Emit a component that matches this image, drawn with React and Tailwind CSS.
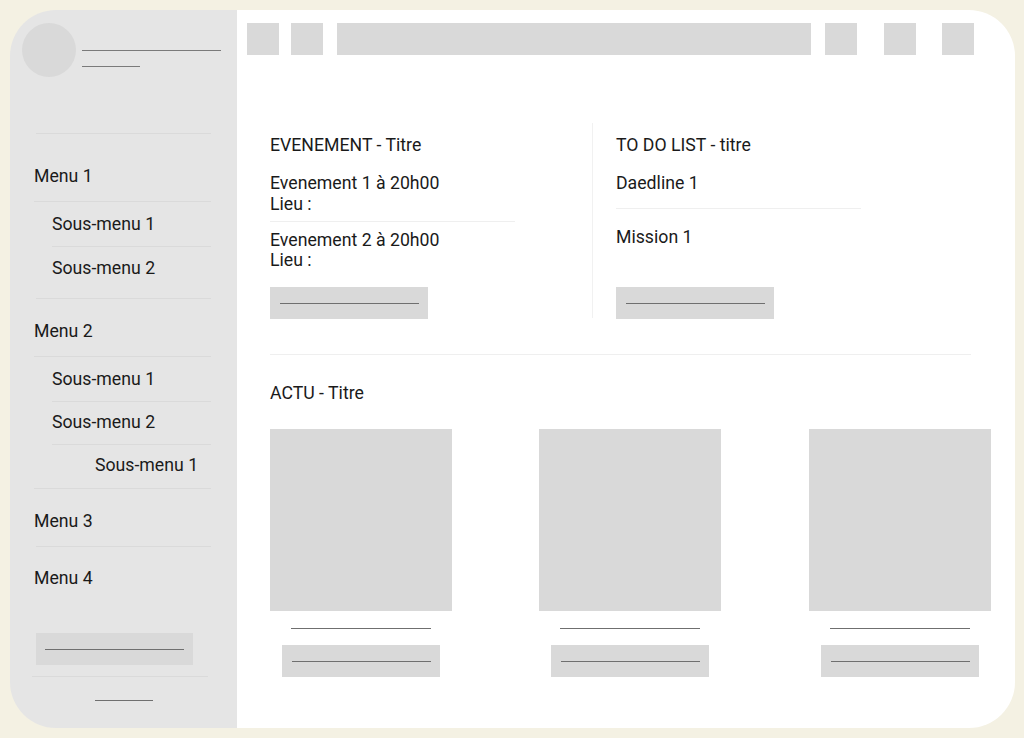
export default function App() {
  const Box = ({ className = "" }) => (
    <div className={"h-[32px] bg-[#d9d9d9] shrink-0 " + className} />
  );
  const LineBtn = ({ className = "" }) => (
    <div className={"w-[158px] h-[32px] bg-[#d9d9d9] flex items-center justify-center " + className}>
      <div className="h-px w-[139px] bg-[#6f6f6f]" />
    </div>
  );
  const Card = ({ className = "" }) => (
    <div className={"w-[182px] flex flex-col items-center " + className}>
      <div className="w-[182px] h-[182px] bg-[#d9d9d9]" />
      <div className="mt-[17px] h-px w-[140px] bg-[#6f6f6f]" />
      <LineBtn className="mt-[16px]" />
    </div>
  );

  return (
    <div className="w-[1024px] h-[738px] bg-[#f4f1e3] pt-[10px] pl-[10px] pr-[9px] pb-[10px] [font-family:Roboto,'Noto_Sans',sans-serif] text-[17.7px] leading-[21px] text-[#1a1a1a]">
      <div className="w-full h-full rounded-[46px] overflow-hidden flex">
        {/* Sidebar */}
        <aside className="w-[227px] shrink-0 bg-[#e5e5e5] flex flex-col">
          <div className="flex pt-[13px] pl-[12px]">
            <div className="w-[54px] h-[54px] rounded-full bg-[#d9d9d9]" />
            <div className="ml-[6px] pt-[27px] flex flex-col">
              <div className="h-px w-[139px] bg-[#7a7a7a]" />
              <div className="h-px w-[58px] bg-[#7a7a7a] mt-[15px]" />
            </div>
          </div>
          <div className="mt-[56px] h-px ml-[26px] w-[175px] bg-[#dadada]" />
          <div className="pl-[24px] pt-[32px] pb-[14px]">Menu 1</div>
          <div className="h-px ml-[24px] w-[177px] bg-[#dadada]" />
          <div className="pl-[42px] pt-[12px] pb-[11px]">Sous-menu 1</div>
          <div className="h-px ml-[42px] w-[159px] bg-[#dadada]" />
          <div className="pl-[42px] pt-[11px] pb-[19px]">Sous-menu 2</div>
          <div className="h-px ml-[26px] w-[175px] bg-[#dadada]" />
          <div className="pl-[24px] pt-[22px] pb-[14px]">Menu 2</div>
          <div className="h-px ml-[24px] w-[177px] bg-[#dadada]" />
          <div className="pl-[42px] pt-[12px] pb-[11px]">Sous-menu 1</div>
          <div className="h-px ml-[42px] w-[159px] bg-[#dadada]" />
          <div className="pl-[42px] pt-[10px] pb-[11px]">Sous-menu 2</div>
          <div className="h-px ml-[42px] w-[159px] bg-[#dadada]" />
          <div className="pl-[85px] pt-[10px] pb-[12px]">Sous-menu 1</div>
          <div className="h-px ml-[24px] w-[177px] bg-[#dadada]" />
          <div className="pl-[24px] pt-[22px] pb-[14px]">Menu 3</div>
          <div className="h-px ml-[26px] w-[175px] bg-[#dadada]" />
          <div className="pl-[24px] pt-[21px]">Menu 4</div>
          <div className="mt-[44px] ml-[26px] w-[157px] h-[32px] bg-[#d9d9d9] flex items-center justify-center">
            <div className="h-px w-[139px] bg-[#6f6f6f]" />
          </div>
          <div className="mt-[11px] h-px ml-[22px] w-[176px] bg-[#dadada]" />
          <div className="mt-[23px] h-px ml-[85px] w-[58px] bg-[#6f6f6f]" />
        </aside>

        {/* Main */}
        <main className="flex-1 bg-white flex flex-col">
          <div className="flex pt-[13px] pl-[10px]">
            <Box className="w-[32px]" />
            <Box className="w-[32px] ml-[12px]" />
            <Box className="w-[474px] ml-[14px]" />
            <Box className="w-[32px] ml-[14px]" />
            <Box className="w-[32px] ml-[27px]" />
            <Box className="w-[32px] ml-[26px]" />
          </div>

          <div className="mt-[68px] ml-[33px] flex">
            <div className="w-[322px] flex flex-col">
              <div className="pt-[12px]">EVENEMENT - Titre</div>
              <div className="mt-[17px]">
                <div>Evenement 1 à 20h00</div>
                <div>Lieu :</div>
              </div>
              <div className="mt-[6px] h-px w-[245px] bg-[#efefef]" />
              <div className="mt-[8px] leading-[20px]">
                <div>Evenement 2 à 20h00</div>
                <div>Lieu :</div>
              </div>
              <LineBtn className="mt-[17px]" />
            </div>
            <div className="w-px self-stretch bg-[#f1f1f1] mb-px" />
            <div className="pl-[23px] flex flex-col">
              <div className="pt-[12px]">TO DO LIST - titre</div>
              <div className="mt-[17px]">Daedline 1</div>
              <div className="mt-[14px] h-px w-[245px] bg-[#efefef]" />
              <div className="mt-[18px]">Mission 1</div>
              <LineBtn className="mt-[39px]" />
            </div>
          </div>

          <div className="mt-[35px] ml-[33px] h-px w-[701px] bg-[#efefef]" />
          <div className="mt-[28px] ml-[33px]">ACTU - Titre</div>
          <div className="mt-[25px] ml-[33px] flex">
            <Card />
            <Card className="ml-[87px]" />
            <Card className="ml-[88px]" />
          </div>
        </main>
      </div>
    </div>
  );
}
